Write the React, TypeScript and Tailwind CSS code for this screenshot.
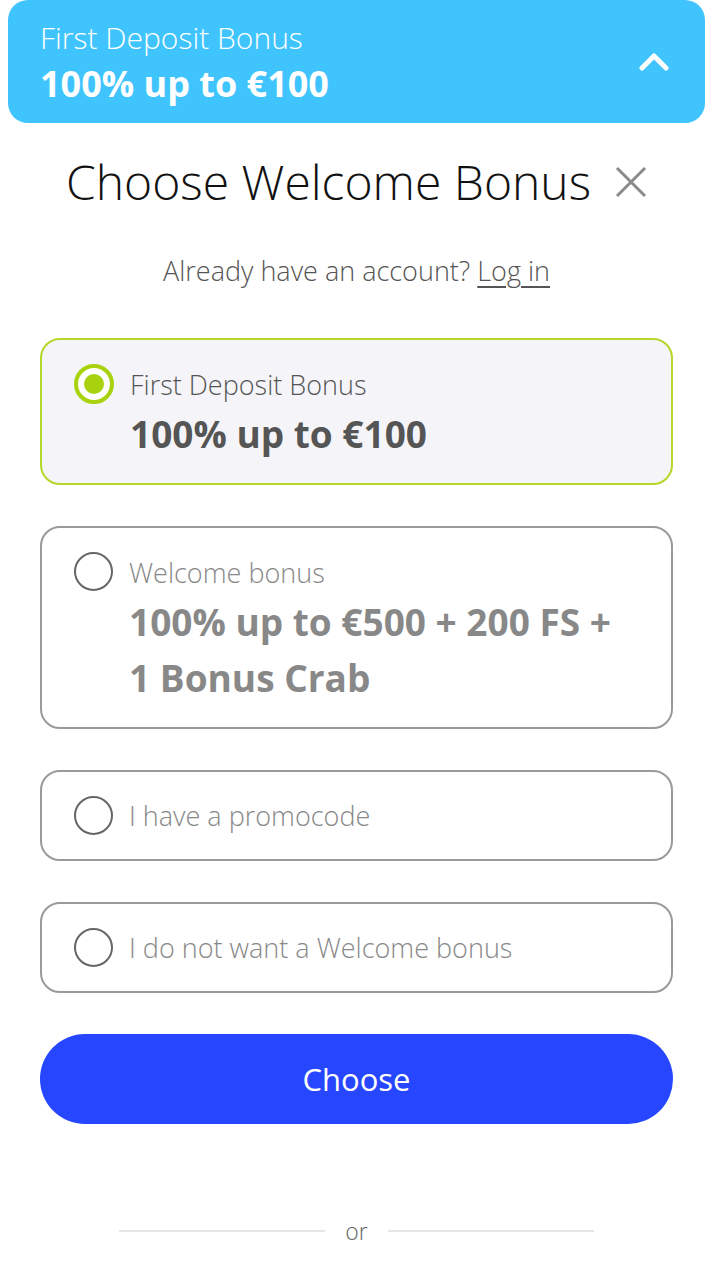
import { useState } from 'react'

type Option = {
  id: string
  label: string
  lines?: string[]
}

const options: Option[] = [
  { id: 'first', label: 'First Deposit Bonus', lines: ['100% up to €100'] },
  { id: 'welcome', label: 'Welcome bonus', lines: ['100% up to €500 + 200 FS +', '1 Bonus Crab'] },
  { id: 'promo', label: 'I have a promocode' },
  { id: 'none', label: 'I do not want a Welcome bonus' },
]

function Radio({ checked }: { checked: boolean }) {
  if (checked) {
    return (
      <div className="w-[40px] h-[40px] shrink-0 rounded-full border-[4px] border-[#a9d20e] bg-white flex items-center justify-center">
        <div className="w-[20px] h-[20px] rounded-full bg-[#a9d20e]" />
      </div>
    )
  }
  return <div className="w-[39px] h-[39px] shrink-0 rounded-full border-2 border-[#666]" />
}

export default function App() {
  const [selected, setSelected] = useState('first')

  return (
    <div className="min-h-screen bg-white font-['Open_Sans','Noto_Sans',sans-serif]">
      {/* Selected bonus banner */}
      <div className="mx-2 h-[123px] rounded-[20px] bg-[#40c4fe] pl-8 pr-9 flex items-start justify-between text-white">
        <div className="pt-[18px]">
          <div className="text-[30px] leading-[40px] font-light">First Deposit Bonus</div>
          <div className="text-[36px] leading-[52px] font-bold">100% up to €100</div>
        </div>
        <svg width="30" height="20" viewBox="0 0 30 20" fill="none" className="mt-[52px]">
          <path d="M3 16 L15 4 L27 16" stroke="white" strokeWidth="5" strokeLinecap="round" strokeLinejoin="round" />
        </svg>
      </div>

      {/* Title */}
      <div className="mt-[29px] flex items-center justify-center gap-6">
        <h1 className="text-[48px] leading-[60px] font-light text-[#111]">Choose Welcome Bonus</h1>
        <svg width="32" height="32" viewBox="0 0 32 32" fill="none">
          <path d="M2 2 L30 30 M30 2 L2 30" stroke="#8a8a8a" strokeWidth="3" />
        </svg>
      </div>

      <p className="mt-[43px] text-center text-[27px] leading-[32px] text-[#555] font-light">
        Already have an account? <span className="underline underline-offset-[5px]">Log in</span>
      </p>

      {/* Options */}
      <div className="mt-[51px] px-10 flex flex-col gap-[41px]">
        {options.map((o) => {
          const active = selected === o.id
          const color = active ? 'text-[#555]' : 'text-[#888]'
          return (
            <button
              key={o.id}
              onClick={() => setSelected(o.id)}
              className={
                'w-full text-left rounded-[20px] border-2 pl-8 pr-6 flex gap-4 ' +
                (active ? 'border-[#b5d72a] bg-[#f5f5f9] ' : 'border-[#9a9a9a] bg-white ') +
                (o.lines ? 'items-start pt-[24px] pb-[21px]' : 'items-center h-[91px]')
              }
            >
              <Radio checked={active} />
              <div className={color}>
                <div className="text-[27px] leading-[42px] font-light">{o.label}</div>
                {o.lines?.map((l) => (
                  <div key={l} className="text-[37px] leading-[56px] font-bold">
                    {l}
                  </div>
                ))}
              </div>
            </button>
          )
        })}

        <button className="h-[90px] w-full rounded-full bg-[#2647ff] text-white text-[31px]">Choose</button>
      </div>

      {/* Divider */}
      <div className="mt-[92px] flex items-center justify-center gap-5">
        <div className="w-[206px] h-[2px] bg-[#e6e6e6]" />
        <span className="text-[23px] text-[#666] font-light leading-[30px]">or</span>
        <div className="w-[206px] h-[2px] bg-[#e6e6e6]" />
      </div>
    </div>
  )
}
